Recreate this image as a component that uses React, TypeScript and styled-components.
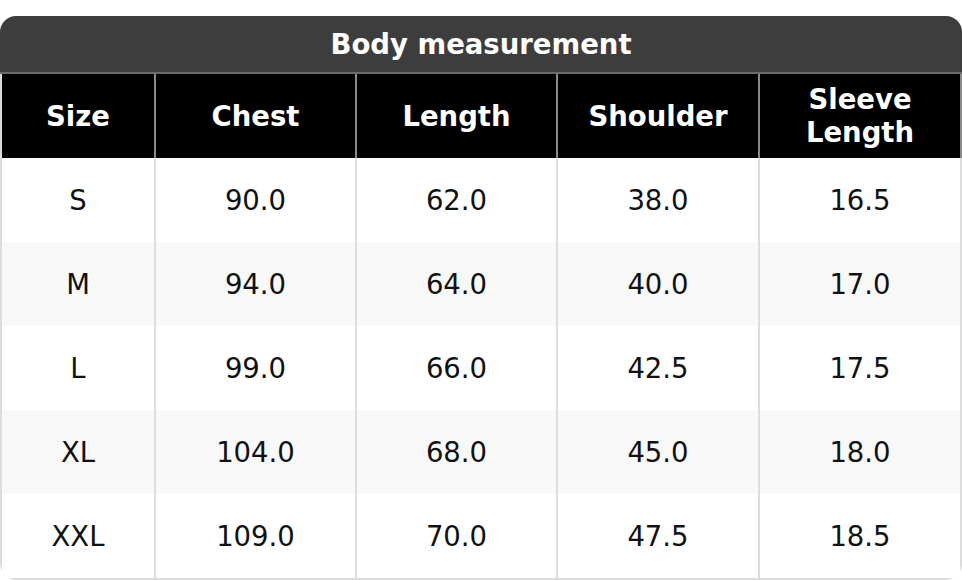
import React from 'react';
import styled, { createGlobalStyle } from 'styled-components';

const GlobalStyle = createGlobalStyle`
  html, body {
    margin: 0;
    padding: 0;
    background: #ffffff;
  }
  body {
    font-family: "DejaVu Sans", "Liberation Sans", sans-serif;
  }
`;

const Page = styled.div`
  width: 962px;
  padding-top: 16px;
`;

const Card = styled.div`
  width: 962px;
  border-radius: 16px;
  overflow: hidden;
  background: #ffffff;
`;

const Title = styled.div`
  height: 56px;
  display: flex;
  align-items: center;
  justify-content: center;
  background: #3d3d3d;
  border-bottom: 2px solid #6a6a6a;
  color: #ffffff;
  font-size: 27.5px;
  font-weight: bold;
`;

const Grid = styled.div`
  display: grid;
  grid-template-columns: 154px 201px 201px 202px 1fr;
  border: 2px solid #dcdcdc;
  border-top: none;
  border-radius: 0 0 16px 16px;
`;

const HeadCell = styled.div`
  height: 84px;
  display: flex;
  align-items: center;
  justify-content: center;
  text-align: center;
  background: #000000;
  color: #ffffff;
  font-size: 27.5px;
  font-weight: bold;
  line-height: 33px;
  border-right: 2px solid #8a8a8a;

  &:nth-child(5) {
    margin-right: -2px;
  }
`;

const Cell = styled.div<{ shaded: boolean; last: boolean }>`
  height: 84px;
  display: flex;
  align-items: center;
  justify-content: center;
  background: ${props => (props.shaded ? '#f8f8f8' : '#ffffff')};
  color: #111111;
  font-size: 27.5px;
  border-right: ${props => (props.last ? 'none' : '2px solid #dddddd')};
`;

const headers = ['Size', 'Chest', 'Length', 'Shoulder', 'Sleeve\nLength'];

const rows = [
  ['S', '90.0', '62.0', '38.0', '16.5'],
  ['M', '94.0', '64.0', '40.0', '17.0'],
  ['L', '99.0', '66.0', '42.5', '17.5'],
  ['XL', '104.0', '68.0', '45.0', '18.0'],
  ['XXL', '109.0', '70.0', '47.5', '18.5'],
];

const App: React.FC = () => {
  return (
    <>
      <GlobalStyle />
      <Page>
        <Card>
          <Title>Body measurement</Title>
          <Grid>
            {headers.map(h => (
              <HeadCell key={h}>
                <span style={{ whiteSpace: 'pre-line' }}>{h}</span>
              </HeadCell>
            ))}
            {rows.map((row, r) =>
              row.map((value, c) => (
                <Cell key={`${r}-${c}`} shaded={r % 2 === 1} last={c === row.length - 1}>
                  {value}
                </Cell>
              ))
            )}
          </Grid>
        </Card>
      </Page>
    </>
  );
};

export default App;
